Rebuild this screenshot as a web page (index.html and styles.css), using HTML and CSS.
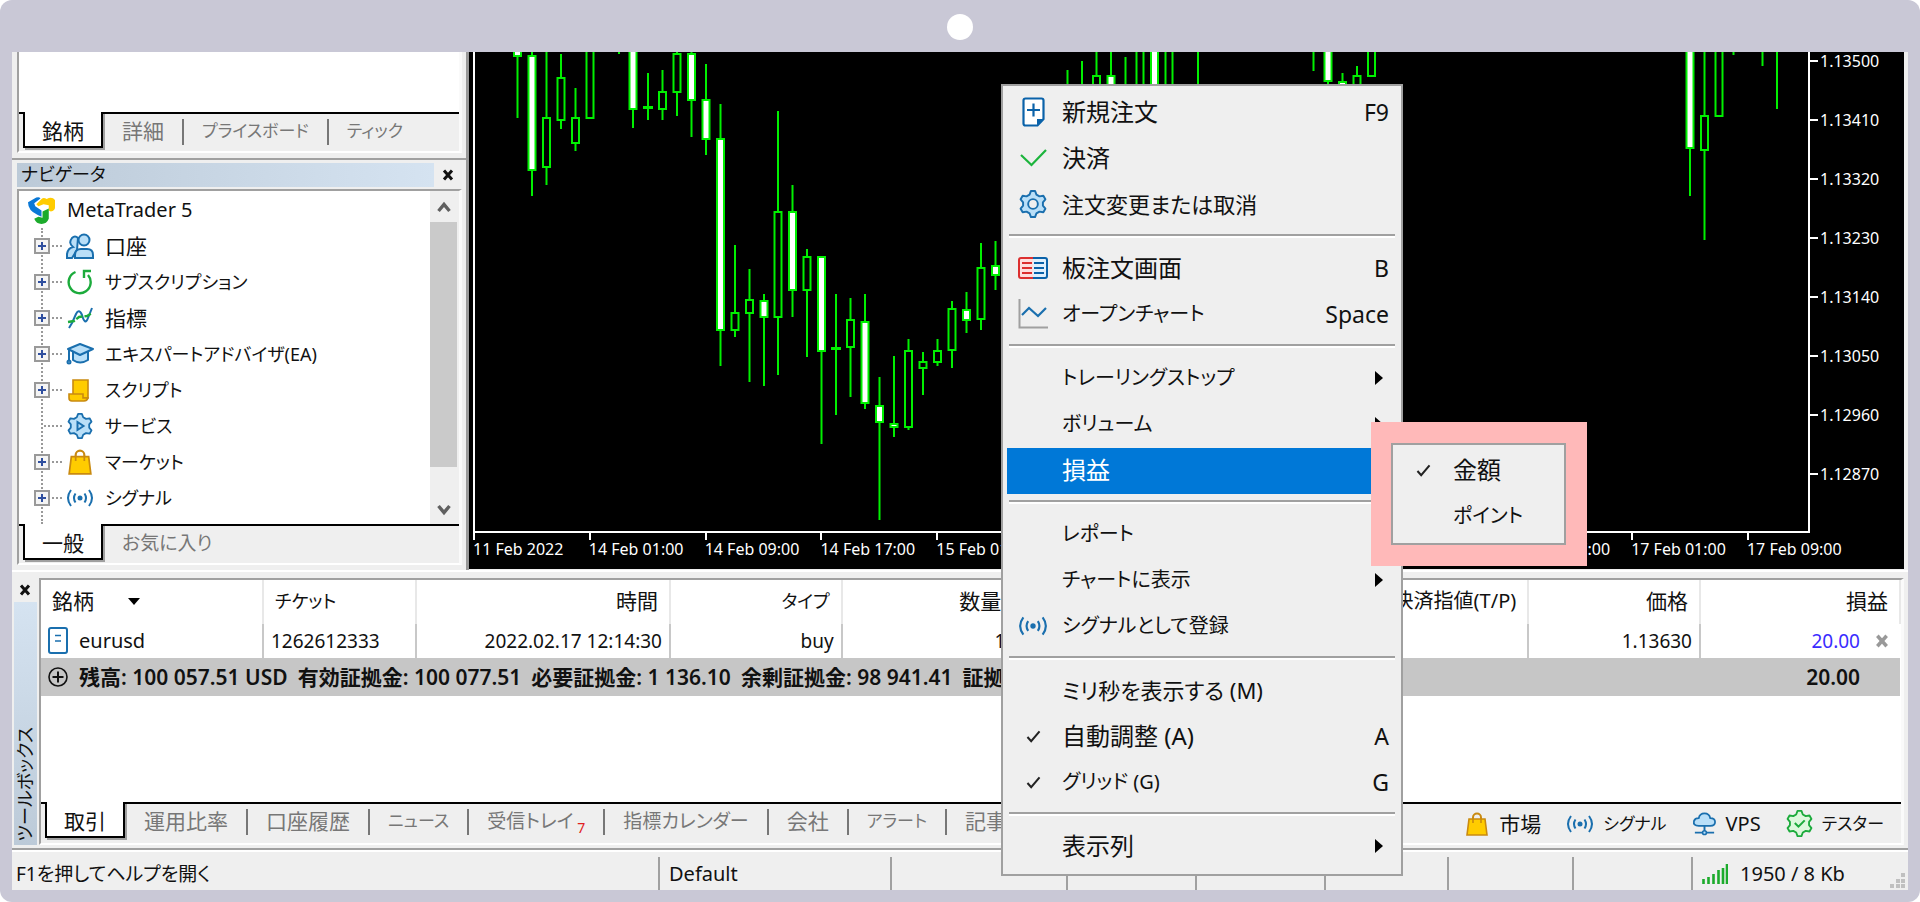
FILE: index.html
```html
<!DOCTYPE html>
<html lang="ja">
<head>
<meta charset="utf-8">
<title>MetaTrader 5</title>
<link rel="stylesheet" href="styles.css">
</head>
<body>
<svg class="defs" aria-hidden="true">
  <symbol id="gear" viewBox="0 0 26 26"><path d="M11.1.9h3.8l1.3 3.4L19 5.9l3.6-.6 1.9 3.3-2.3 2.8v3.2l2.3 2.8-1.9 3.3-3.6-.6-2.8 1.6-1.3 3.4h-3.8l-1.3-3.4L7 20.1l-3.6.6-1.9-3.3 2.3-2.8v-3.2L1.5 8.6l1.9-3.3 3.6.6 2.8-1.6z" stroke-width="1.8" stroke-linejoin="round"/></symbol>
  <symbol id="signal" viewBox="0 0 28 18"><g fill="none" stroke="#1a6fae" stroke-width="2"><path d="M5 1Q-1 9 5 17M23 1q6 8 0 16M9.500 4.500q-3 4.500 0 9M18.500 4.500q3 4.500 0 9"/></g><circle cx="14" cy="9" r="2.500" fill="#1a6fae"/></symbol>
  <symbol id="bag" viewBox="0 0 22 24"><path d="M7 9V5.500a4 4 0 0 1 8 0V9" fill="none" stroke="#c98a10" stroke-width="2"/><path d="M3 7h16l2 16H1z" fill="#fc0" stroke="#c98a10" stroke-width="1.600"/><path d="M7 7v4M15 7v4" stroke="#c98a10" stroke-width="1.600"/></symbol>
  <symbol id="tick" viewBox="0 0 16 14"><path d="M1.500 7.500l4 4.500 9-10.500" fill="none" stroke="#222" stroke-width="2.200"/></symbol>
  <symbol id="close" viewBox="0 0 12 12"><path d="M2 1.500l8 9M10 1.500l-8 9" stroke="currentColor" stroke-width="3"/></symbol>
</svg>

<div class="device">
  <div class="camera"></div>
  <div class="screen">
    <div class="upper">
      <aside class="side">
        <section class="panel watch">
          <div class="sheet"></div>
          <nav class="tabs">
            <button class="tab active">銘柄</button><button class="tab">詳細</button><button class="tab kana">プライスボード</button><button class="tab kana">ティック</button>
          </nav>
        </section>
        <section class="navigator">
          <header class="title"><h2 class="kana">ナビゲータ</h2><button class="close" aria-label="閉じる"><svg><use href="#close"/></svg></button></header>
          <div class="panel grow">
            <div class="tree-area">
              <div class="tree">
                <div class="root">
                  <svg class="logo" viewBox="0 0 26 26"><path d="M0 5L8 .5Q11-.5 12 1.500L6 6l1 3 6 4v6L9 17Q0 13 0 5z" fill="#0a78d6"/><path d="M8 7l5-5q2-2 5 0 5-3 8 1v7q0 3-4 4l-2-1V8l-5-1-5 2z" fill="#fc0"/><path d="M14 14l6-3v10q-2 5-7 5-5 0-7-5l4-2 4 1z" fill="#1cab2c"/></svg>
                  MetaTrader 5
                </div>
                <ul>
                  <li><button class="plus" aria-label="展開"></button><svg class="ti" viewBox="0 0 28 26"><g fill="#b9dff8" stroke="#1a6fae" stroke-width="2"><path d="M1 25v-4q1-6 6-7Q2 10 6 5q3-3 6 0l-1 12-5 8z"/><circle cx="18" cy="7" r="5.500"/><path d="M9 25v-3q0-6 6-6h6q6 0 6 6v3z"/></g></svg><span class="kanji">口座</span></li>
                  <li><button class="plus" aria-label="展開"></button><svg class="ti" viewBox="0 0 28 26"><path d="M9.500 3A11 11 0 1 0 22 6M18 9V2h7" fill="none" stroke="#1cab3c" stroke-width="2.400"/></svg><span class="kana">サブスクリプション</span></li>
                  <li><button class="plus" aria-label="展開"></button><svg class="ti" viewBox="0 0 28 26"><path d="M3 23l3-5 4-9q3-6 6 1 3 11 6 3l2-5 2-5" fill="none" stroke="#1a6fae" stroke-width="2"/><path d="M2 17l6-1 5-4 8-1 5-3" fill="none" stroke="#1cab3c" stroke-width="2.400" stroke-dasharray="7 2"/></svg><span class="kanji">指標</span></li>
                  <li><button class="plus" aria-label="展開"></button><svg class="ti" viewBox="0 0 28 26"><g fill="#b9dff8" stroke="#1a6fae" stroke-width="2" stroke-linejoin="round"><path d="M7 10v9q7 5 15 0v-9"/><path d="M14 3l13 5-13 6L2 8z"/><path d="M3 9v11" fill="none"/><circle cx="3" cy="21" r="1.500"/></g></svg><span class="kana">エキスパートアドバイザ(EA)</span></li>
                  <li><button class="plus" aria-label="展開"></button><svg class="ti" viewBox="0 0 28 26"><g fill="#fc0" stroke="#c98a10" stroke-width="1.600"><path d="M7 3h15v18H7z"/><path d="M3 17h14v4h5q-1 3-4 3H6q-3 0-3-3z"/></g></svg><span class="kana">スクリプト</span></li>
                  <li class="leaf"><svg class="ti" viewBox="0 0 26 26"><use href="#gear" fill="#b9dff8" stroke="#1a6fae"/><path d="M10.500 9l6 4-6 4z" fill="none" stroke="#1a6fae" stroke-width="2"/></svg><span class="kana">サービス</span></li>
                  <li><button class="plus" aria-label="展開"></button><svg class="ti"><use href="#bag"/></svg><span class="kana">マーケット</span></li>
                  <li><button class="plus" aria-label="展開"></button><svg class="ti"><use href="#signal"/></svg><span class="kana">シグナル</span></li>
                </ul>
              </div>
              <div class="scroll"><svg viewBox="0 0 14 12"><path d="M1.500 10L7 3.500l5.500 6.500" fill="none" stroke="#606060" stroke-width="3.400"/></svg><div class="thumb"></div><svg viewBox="0 0 14 12"><path d="M1.500 2L7 8.500 12.500 2" fill="none" stroke="#606060" stroke-width="3.400"/></svg></div>
            </div>
            <nav class="tabs">
              <button class="tab active">一般</button><button class="tab mixed">お気に入り</button>
            </nav>
          </div>
        </section>
      </aside>

      <main class="chart">
        <div class="plot">
          <svg class="candles" width="1336" height="480" viewBox="474 52 1336 480" fill="none" stroke="#00f000" stroke-width="2">
            <path d="M517.500 56V118M532 52V196M546.500 52V117M546.500 167V185M561 54V77M561 120V129M575.500 88V117M575.500 143V151M619 52V54M633 109V128M648 73V120M662.500 70V92M662.500 109V120M677 52V54M677 92V116M691.500 52V137M706 64V155M720.500 104V366M735 245V313M735 330V337M749.500 269V300M749.500 313V382M764 294V386M778 111V212M778 317V375M792.500 185V317M807 249V257M807 290V357M821.500 351V444M836 294V415M850.500 298V320M850.500 347V397M865 294V409M879.500 377V520M894 356V437M908.500 339V351M908.500 427V430M923 352V362M923 368V395M937.500 339V351M937.500 362V366M952 301V309M952 350V368M966.500 292V333M981 243V268M981 319V330M995.500 241V290M1067.500 70V90M1082 61V90M1096.500 52V76M1111 52V76M1125.500 57V90M1198 52V90M1313.500 52V71M1328 80V84M1342.500 73V90M1357 66V76M1690 148V196M1704.500 52V116M1704.500 150V240M1733.500 52V55M1762.500 52V66M1777 52V109"/>
            <path d="M543 118h7v49h-7zM557.500 78h7v42h-7zM572 118h7v25h-7zM586.500 50h7v68h-7zM659 92h7v17h-7zM673.500 54h7v38h-7zM731.500 313h7v17h-7zM746 300h7v13h-7zM774.500 212h7v105h-7zM803.500 257h7v33h-7zM847 320h7v27h-7zM905 351h7v76h-7zM919.500 362h7v6h-7zM934 351h7v11h-7zM948.500 309h7v41h-7zM977.500 268h7v51h-7zM1093 76h7v12h-7zM1136.500 50h7v40h-7zM1165.500 50h7v40h-7zM1353.500 76h7v12h-7zM1368 50h7v26h-7zM1701 116h7v34h-7zM1715.500 50h7v66h-7z"/>
            <path fill="#fff" d="M514 50h7v6h-7zM528.500 56h7v114h-7zM629.500 50h7v59h-7zM644 107h8v1h-8zM688 54h7v46h-7zM702.500 100h7v39h-7zM717 139h7v191h-7zM760.500 301h7v16h-7zM789 212h7v78h-7zM818 257h7v94h-7zM832 348h8v1h-8zM861.500 322h7v81h-7zM876 406h7v16h-7zM890.500 424h7v3h-7zM963 310h7v10h-7zM992 266h7v9h-7zM1107.500 76h7v14h-7zM1151 50h7v40h-7zM1324.500 50h7v31h-7zM1339 82h7v6h-7zM1686.500 50h7v98h-7z"/>
          </svg>
        </div>
        <div class="prices"><span>1.13500</span><span>1.13410</span><span>1.13320</span><span>1.13230</span><span>1.13140</span><span>1.13050</span><span>1.12960</span><span>1.12870</span></div>
        <div class="times"><span>11 Feb 2022</span><span>14 Feb 01:00</span><span>14 Feb 09:00</span><span>14 Feb 17:00</span><span>15 Feb 01:00</span><span></span><span></span><span></span><span></span><span>16 Feb 17:00</span><span>17 Feb 01:00</span><span>17 Feb 09:00</span></div>
      </main>
    </div>

    <section class="toolbox">
      <div class="grip"><button class="close" aria-label="閉じる"><svg><use href="#close"/></svg></button><div class="strip"><span>ツールボックス</span></div></div>
      <div class="panel grow">
        <div class="trades">
          <table>
            <colgroup><col class="c-symbol"><col class="c-ticket"><col class="c-time"><col><col><col><col><col><col><col class="c-profit"></colgroup>
            <thead><tr><th class="left">銘柄<svg class="sort" viewBox="0 0 12 7"><path d="M0 0h12L6 7z"/></svg></th><th class="left kana">チケット</th><th>時間</th><th class="kana">タイプ</th><th>数量</th><th></th><th></th><th class="mixed">決済指値(T/P)</th><th>価格</th><th>損益</th></tr></thead>
            <tbody>
              <tr><td class="left sym"><svg class="doc" viewBox="0 0 20 27"><rect x="1" y="1" width="18" height="25" rx="2" fill="#fff" stroke="#1a6fae" stroke-width="2"/><path d="M7 8.500h6M7 14h6" stroke="#1a6fae" stroke-width="1.600"/></svg>eurusd</td><td class="left">1262612333</td><td>2022.02.17 12:14:30</td><td>buy</td><td>1</td><td></td><td></td><td></td><td>1.13630</td><td class="profit"><span>20.00</span><button class="close" aria-label="決済"><svg><use href="#close"/></svg></button></td></tr>
              <tr class="total"><td colspan="9" class="left"><div class="sums"><svg class="circle" viewBox="0 0 20 20"><path d="M10 4.500v11M4.500 10h11" stroke="#111" stroke-width="2"/><circle cx="10" cy="10" r="9" fill="none" stroke="#111" stroke-width="1.600"/></svg><span>残高: 100 057.51 USD</span><span>有効証拠金: 100 077.51</span><span>必要証拠金: 1 136.10</span><span>余剰証拠金: 98 941.41</span><span>証拠金</span></div></td><td>20.00</td></tr>
            </tbody>
          </table>
        </div>
        <nav class="tabs">
          <button class="tab active">取引</button><button class="tab">運用比率</button><button class="tab">口座履歴</button><button class="tab kana">ニュース</button><button class="tab mixed">受信トレイ<sub>7</sub></button><button class="tab mixed">指標カレンダー</button><button class="tab">会社</button><button class="tab kana">アラート</button><button class="tab">記事</button>
          <div class="links">
            <button><svg class="l-bag"><use href="#bag"/></svg><span class="kanji">市場</span></button>
            <button><svg class="l-sig"><use href="#signal"/></svg><span class="kana">シグナル</span></button>
            <button><svg class="l-vps" viewBox="0 0 26 24"><path d="M7 14q-6 0-5-5 1-3 5-3 1-5 6-5t6 5q5 0 5 4 0 4-5 4z" fill="#b9dff8" stroke="#1a6fae" stroke-width="1.800"/><path d="M13 14v5M3 21h20" stroke="#1a6fae" stroke-width="2"/><circle cx="13" cy="21" r="2" fill="#b9dff8" stroke="#1a6fae" stroke-width="1.600"/></svg>VPS</button>
            <button><svg class="l-test" viewBox="0 0 26 26"><use href="#gear" fill="#dcf8dc" stroke="#1cab3c"/><path d="M8.500 12.500l3.500 3.500 6-6" fill="none" stroke="#1cab3c" stroke-width="2"/></svg><span class="kana">テスター</span></button>
          </div>
        </nav>
      </div>
    </section>

    <footer class="status">
      <span class="mixed">F1を押してヘルプを開く</span><span>Default</span><span></span><span></span><span></span><span></span><span></span><span></span>
      <span class="net"><svg class="bars" viewBox="0 0 26 20"><path d="M1.500 20v-5M6.500 20v-7M11.500 20v-10M16.500 20V6M21 20V4M25 20V0" stroke="#1cab2c" stroke-width="2.600"/></svg>1950 / 8 Kb<svg class="resize" viewBox="0 0 15 15"><path d="M11 0h4v4h-4zM11 6h4v4h-4zM11 11h4v4h-4zM6 6h4v4H6zM6 11h4v4H6zM0 11h4v4H0z" fill="#c0c0c0"/></svg></span>
    </footer>
  </div>

  <div class="menu" role="menu">
    <button><i><svg width="23" height="30" viewBox="0 0 23 30"><path d="M3.500 1.500h16q2 0 2 2V22l-6 6.500h-12q-2 0-2-2v-23q0-2 2-2z" fill="#fff" stroke="#0a62a9" stroke-width="2.200"/><path d="M15 28v-6h6z" fill="#0a62a9"/><path d="M11.500 6.500v13M5 13h13" stroke="#0a62a9" stroke-width="2.200"/></svg></i><b>新規注文</b><kbd>F9</kbd></button>
    <button><i><svg width="27" height="18" viewBox="0 0 27 18"><path d="M1 6l10.500 10L26 1" fill="none" stroke="#1cb43c" stroke-width="2.200"/></svg></i><b>決済</b></button>
    <button><i><svg width="28" height="28" viewBox="0 0 26 26"><use href="#gear" fill="#b9dff8" stroke="#1a6fae"/><circle cx="13" cy="13" r="4.500" fill="#efefef" stroke="#1a6fae" stroke-width="1.800"/></svg></i><b class="mixed">注文変更または取消</b></button>
    <hr>
    <button><i><svg width="30" height="22" viewBox="0 0 30 22"><path d="M15 1H3Q1 1 1 3v16q0 2 2 2h12" fill="#fde0e0" stroke="#dc2f2f" stroke-width="2"/><path d="M15 1h12q2 0 2 2v16q0 2-2 2H15" fill="#e0f0fd" stroke="#0a62a9" stroke-width="2"/><path d="M4 6h10M4 11h10M4 16h10" stroke="#dc2f2f" stroke-width="2.200"/><path d="M16 6h10M16 11h10M16 16h10" stroke="#0a62a9" stroke-width="2.200"/></svg></i><b>板注文画面</b><kbd>B</kbd></button>
    <button><i><svg width="30" height="30" viewBox="0 0 30 30"><path d="M1.500 0v28.500H30" fill="none" stroke="#a0a0a0" stroke-width="2"/><path d="M4 16l7-7 9 8 8-8" fill="none" stroke="#1a6fae" stroke-width="2.200"/></svg></i><b class="kana">オープンチャート</b><kbd>Space</kbd></button>
    <hr>
    <button class="sub"><b class="kana">トレーリングストップ</b></button>
    <button class="sub"><b class="kana">ボリューム</b></button>
    <button class="sub selected"><b>損益</b></button>
    <hr>
    <button><b class="kana">レポート</b></button>
    <button class="sub"><b class="kana">チャートに表示</b></button>
    <button><i><svg width="30" height="20"><use href="#signal"/></svg></i><b class="kana">シグナルとして登録</b></button>
    <hr>
    <button><b class="mixed">ミリ秒を表示する (M)</b></button>
    <button><i><svg width="15" height="13"><use href="#tick"/></svg></i><b>自動調整 (A)</b><kbd>A</kbd></button>
    <button><i><svg width="15" height="13"><use href="#tick"/></svg></i><b class="kana">グリッド (G)</b><kbd>G</kbd></button>
    <hr>
    <button class="sub"><b>表示列</b></button>
  </div>
  <div class="callout">
    <div class="submenu" role="menu">
      <button><i><svg width="15" height="13"><use href="#tick"/></svg></i><b>金額</b></button>
      <button><b class="kana">ポイント</b></button>
    </div>
  </div>
</div>
</body>
</html>
```
FILE: styles.css
```css
* { box-sizing: border-box; }
body {
  margin: 0;
  background: #fff;
  color: #111;
  font: 20px/28px "Noto Sans", "Noto Sans CJK JP", sans-serif;
  font-feature-settings: "palt";
}
button {
  margin: 0; padding: 0; border: 0; background: none;
  color: inherit; font: inherit; font-feature-settings: inherit;
  text-align: left; white-space: nowrap;
}
svg { display: block; flex: none; }
.defs { display: none; }

/* text sizes by script */
.kanji { font-size: 21px; }
.mixed { font-size: 19px; }
.kana { font-size: 18px; }

.device {
  position: relative;
  display: flex; flex-direction: column;
  min-height: 100vh;
  padding: 0 12px 12px;
  border-radius: 12px;
  background: #c9c8d6;
}
.camera {
  width: 26px; height: 26px;
  margin: 14px auto 12px;
  border-radius: 50%;
  background: #fff;
}
.screen {
  flex: 1;
  display: flex; flex-direction: column;
  background: #efefef;
}
.upper { display: flex; height: 518px; }

/* shared panels */
.panel {
  display: flex; flex-direction: column;
  border-left: 2px solid #a0a0a0;
  border-right: 3px solid #fafafa;
  border-bottom: 2px solid #fff;
}
.grow { flex: 1; }
.close { display: grid; place-items: center; }
.close svg { width: 12px; height: 12px; }
.tabs {
  display: flex;
  height: 39px;
  padding-left: 4px;
  border-top: 2px solid #000;
}
.tab {
  position: relative;
  height: 34px;
  padding: 0 19px;
  color: #777;
  font-size: 21px;
}
.tab.mixed { font-size: 19px; }
.tab.kana { font-size: 17px; }
.tab + .tab + .tab::before {
  content: "";
  position: absolute; left: -1px; top: 5px;
  width: 2px; height: 26px;
  background: #777;
}
.tab.active {
  height: 36px;
  margin-top: -2px;
  padding: 3px 17px 0;
  border: 2px solid #000; border-top: 0;
  background: #fff;
  color: #111;
  box-shadow: 2px 2px 0 #a0a0a0;
}

/* left column */
.side {
  display: flex; flex-direction: column;
  width: 457px;
  padding: 0 4px 0 5px;
  border-right: 3px solid #999;
}
.watch { height: 102px; }
.sheet { flex: 1; background: #fff; }
.navigator {
  flex: 1;
  display: flex; flex-direction: column;
  margin: 5px -4px 5px -5px; padding: 3px 4px 0 5px;
  border-top: 2px solid #a0a0a0;
}
.title { display: flex; height: 26px; }
.title h2 {
  flex: 1;
  height: 24px;
  margin: 0; padding-left: 4px;
  background: linear-gradient(90deg, #bccad8, #d5e3f1);
  font-weight: 400; line-height: 22px;
}
.title .close { width: 28px; height: 24px; }
.navigator .panel { border-top: 2px solid #a0a0a0; }
.tree-area { flex: 1; display: flex; min-height: 0; background: #fff; }
.tree { flex: 1; padding-top: 1px; }
.root { display: flex; align-items: center; gap: 12px; height: 36px; padding-left: 9px; }
.logo { width: 27px; height: 27px; }
.tree ul {
  margin: 0 0 0 22px; padding: 0;
  height: 296px;
  border-left: 2px dotted #999;
  list-style: none;
}
.tree li {
  display: flex; align-items: center;
  height: 36px;
}
.tree li::before {
  content: "";
  order: 1;
  width: 10px; margin: 0 4px 0 2px;
  border-top: 2px dotted #999;
}
.tree .leaf::before { width: 18px; margin-left: 1px; }
.tree li > * { order: 2; }
.tree .plus {
  order: 0;
  width: 16px; height: 16px;
  margin-left: -9px;
  border: 2px solid #999;
  background:
    linear-gradient(#2f4f9f, #2f4f9f) center / 8px 2px no-repeat,
    linear-gradient(#2f4f9f, #2f4f9f) center / 2px 8px no-repeat, #f4f4f4;
}
.ti { width: 28px; height: 26px; margin-right: 11px; }
.scroll {
  display: flex; flex-direction: column; align-items: center; justify-content: space-between;
  width: 29px;
  padding: 10px 2px 8px 0;
  background: #efefef;
}
.scroll svg { width: 14px; height: 12px; }
.thumb { width: 100%; height: 245px; margin: 9px 0 auto; background: #cacaca; }

/* chart */
.chart {
  flex: 1; min-width: 0;
  display: grid;
  grid-template: 481px 36px / minmax(0, 1fr) 94px;
  margin-right: 4px; padding-left: 4px;
  height: 517px;
  background: #000;
  color: #fff;
  font-size: 16px; line-height: 18px;
}
.plot { border: 2px solid #fff; border-top: 0; overflow: hidden; }
.candles { margin-left: -1px; }
.prices {
  display: flex; flex-direction: column; justify-content: space-between;
  height: 431px;
}
.prices span { display: flex; align-items: center; gap: 2px; }
.prices span::before { content: ""; width: 8px; height: 2px; background: #fff; }
.times {
  grid-column: 1 / 3;
  display: grid;
  grid-template-columns: repeat(11, minmax(0, 1158fr)) minmax(0, 1570fr);
  white-space: nowrap;
}
.times span::before { content: ""; display: block; width: 2px; height: 7px; background: #fff; }

/* toolbox */
.toolbox { flex: 1; display: flex; padding: 6px 4px 3px 0; border-top: 2px solid #fff; }
.grip { display: flex; flex-direction: column; width: 27px; }
.grip .close { width: 25px; height: 24px; }
.strip {
  flex: 1;
  display: flex; align-items: flex-end; justify-content: center;
  margin: 0 2px; padding-bottom: 4px;
  background: linear-gradient(#d5e3f1, #bccad8);
  font-size: 18px; line-height: 23px;
}
.strip span { writing-mode: vertical-rl; text-orientation: sideways; transform: rotate(180deg); }
.toolbox .panel { min-width: 0; border-top: 2px solid #a0a0a0; }
.trades { flex: 1; background: #fff; }
table { width: 100%; border-collapse: collapse; table-layout: fixed; }
.c-symbol { width: 222px; }
.c-ticket { width: 153px; }
.c-time { width: 254px; }
.c-profit { width: 200px; }
th, td {
  padding: 0 7px;
  border-right: 2px solid #c8c8c8;
  text-align: right; font-weight: 400; white-space: nowrap;
}
th { height: 44px; padding: 0 11px 2px; border-color: #e8e8e8; font-size: 21px; }
th.kana { font-size: 18px; }
th.mixed { font-size: 20px; }
td { height: 34px; font-size: 19px; }
td:last-child { border-right: 0; }
.left { text-align: left; }
.sort { display: inline-block; width: 12px; height: 7px; margin: 0 0 4px 34px; }
.sym { padding-left: 7px; font-size: 20px; }
.doc { float: left; width: 20px; height: 27px; margin-right: 11px; }
.profit { color: #3a2cff; }
.profit .close { float: right; width: 14px; height: 28px; margin: 0 4px 0 15px; color: #999; }
.profit .close svg { width: 14px; height: 14px; }
.total { background: #c6c6c6; }
.total td { height: 38px; border: 0; font-size: 21px; font-weight: 600; overflow: hidden; }
.total td:last-child { padding-right: 40px; }
.sums { display: flex; align-items: center; gap: 10px; }
.circle { width: 20px; height: 20px; margin-right: 1px; }
.toolbox .tabs { height: 41px; }
.tab sub { color: #e02020; font-size: 14px; line-height: 14px; margin-left: 4px; }
.links { display: flex; align-items: center; gap: 25px; margin-left: auto; padding: 0 17px 0 0; }
.links button { display: flex; align-items: center; gap: 9px; }
.links .kana { font-size: 17px; }
.l-bag { width: 22px; height: 24px; margin-right: 2px; }
.l-sig { width: 28px; height: 18px; }
.l-vps { width: 25px; height: 24px; }
.l-test { width: 27px; height: 27px; }

/* status bar */
.status {
  display: grid;
  grid-template-columns: 646fr 232fr 176fr 129fr 129fr 123fr 125fr 119fr 217fr;
  height: 42px;
  padding-top: 7px;
  border-top: 2px solid #a0a0a0;
  box-shadow: inset 0 2px #fff;
}
.status > span {
  display: flex; align-items: center;
  min-width: 0;
  border-left: 2px solid #a0a0a0;
  padding-left: 9px;
  white-space: nowrap;
}
.status > span:first-child { border: 0; padding-left: 4px; }
.bars { width: 26px; height: 20px; margin-right: 12px; }
.resize { width: 15px; height: 15px; margin: auto 3px 2px auto; }

/* context menu */
.menu, .submenu {
  border: 2px solid #a0a0a0;
  background: #efefef;
  font-size: 23px; line-height: 32px;
}
.menu {
  position: absolute; left: 1001px; top: 84px;
  width: 402px;
  padding: 4px;
}
.menu button, .submenu button {
  position: relative;
  display: grid;
  grid-template-columns: 53px 1fr auto;
  align-items: center;
  width: 100%; height: 46px;
  padding: 0 8px 2px 2px;
}
.menu b, .submenu b { grid-column: 2; font-size: 24px; font-weight: 400; }
.menu i, .submenu i { grid-column: 1; grid-row: 1; display: grid; justify-content: center; padding-right: 5px; }
.menu kbd { font: inherit; grid-column: 3; grid-row: 1; }
.menu .mixed { font-size: 22px; }
.menu .kana, .submenu .kana { font-size: 20px; }
.sub::after {
  content: "";
  grid-column: 3;
  margin-right: 6px;
  border: 7px solid transparent;
  border-left: 8px solid #000; border-right: 0;
}
.selected { background: #0078d7; color: #fff; }
.menu hr {
  height: 4px;
  margin: 6px 2px 8px;
  border: 0; border-top: 2px solid #a0a0a0;
  background: #fff;
}
.callout {
  position: absolute; left: 1371px; top: 422px;
  padding: 21px 21px 21px 20px;
  background: #ffb9b9;
}
.submenu { width: 175px; padding: 3px 4px; }
.submenu button { grid-template-columns: 54px 1fr; }
```
